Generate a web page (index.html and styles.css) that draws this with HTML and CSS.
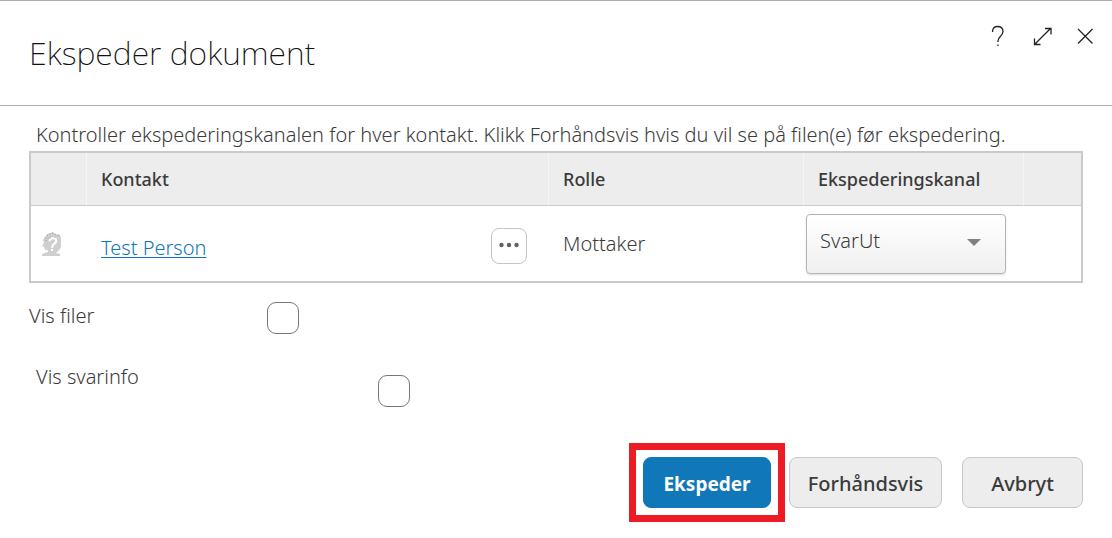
FILE: index.html
```html
<!DOCTYPE html>
<html lang="no">
<head>
    <meta charset="UTF-8">
    <title>Ekspeder dokument</title>
    <link rel="stylesheet" href="styles.css">
</head>
<body>
    <div class="dialog">
        <header class="dialog-header">
            <h1>Ekspeder dokument</h1>
            <div class="tools">
                <button type="button" aria-label="Hjelp">
                    <svg width="20" height="22" viewBox="0 0 20 22"><path d="M4.500 7C4.500 3 6.500 1.500 9.500 1.500s5.500 1.500 5.500 5c0 4.500-5 5-5 9.500v1M10 19.500v1.500"/></svg>
                </button>
                <button type="button" aria-label="Maksimer">
                    <svg width="20" height="22" viewBox="0 0 20 22"><path d="M2.500 19.500L19 3M13 3.500H19V9.500M2.500 13.500V19.500H8.500"/></svg>
                </button>
                <button type="button" aria-label="Lukk">
                    <svg width="20" height="22" viewBox="0 0 20 22"><path d="M2 4L16.500 18.500M16.500 4L2 18.500"/></svg>
                </button>
            </div>
        </header>

        <form class="dialog-body">
            <p class="intro">Kontroller ekspederingskanalen for hver kontakt. Klikk Forhåndsvis hvis du vil se på filen(e) før ekspedering.</p>

            <table class="contacts">
                <thead>
                    <tr>
                        <th class="col-icon"></th>
                        <th>Kontakt</th>
                        <th class="col-role">Rolle</th>
                        <th class="col-channel"><label for="kanal">Ekspederingskanal</label></th>
                        <th class="col-end"></th>
                    </tr>
                </thead>
                <tbody>
                    <tr>
                        <td class="cell-icon">
                            <svg width="22" height="26" viewBox="0 0 22 26">
                                <path fill="#cfcfcf" d="M12 1l3 2 4 1 1 3v9l-1 2-3 3-1 1 4 1v2H1v-2l6-2v-2H4l-1-3-2-1 2-3-1-3 2-3 2-3 3-1z"/>
                                <path fill="none" stroke="#999" stroke-dasharray="1 2" d="M4 7l3-3 4-2 4 2 4 1M5 10l2-3 4-1"/>
                                <path fill="none" stroke="#fff" stroke-width="2" d="M8 10l3-3 4 1v3l-3 3-1 3M10 19h2"/>
                            </svg>
                        </td>
                        <td>
                            <div class="contact">
                                <a href="#">Test Person</a>
                                <button type="button" class="more" aria-label="Mer">
                                    <svg width="22" height="8" viewBox="0 0 22 8"><circle cx="3.500" cy="3" r="2.200"/><circle cx="11" cy="3" r="2.200"/><circle cx="18.500" cy="3" r="2.200"/></svg>
                                </button>
                            </div>
                        </td>
                        <td class="cell-role">Mottaker</td>
                        <td class="cell-channel">
                            <div class="select">
                                <select id="kanal">
                                    <option>SvarUt</option>
                                </select>
                            </div>
                        </td>
                        <td></td>
                    </tr>
                </tbody>
            </table>

            <div class="option option-files">
                <label for="filer">Vis filer</label>
                <input type="checkbox" id="filer">
            </div>
            <div class="option option-info">
                <label for="svarinfo">Vis svarinfo</label>
                <input type="checkbox" id="svarinfo">
            </div>

            <div class="actions">
                <div class="highlight">
                    <button type="button" class="btn btn-primary">Ekspeder</button>
                </div>
                <button type="button" class="btn btn-preview">Forhåndsvis</button>
                <button type="button" class="btn btn-cancel">Avbryt</button>
            </div>
        </form>
    </div>
</body>
</html>
```
FILE: styles.css
```css
* {
    box-sizing: border-box;
    margin: 0;
    padding: 0;
}
body {
    background: #fff;
    color: #3b3b3b;
    font-family: "Noto Sans", "Open Sans", sans-serif;
    font-size: 20px;
    font-weight: 350;
    line-height: 28px;
}
button, select, input {
    font: inherit;
    color: inherit;
}
button {
    cursor: pointer;
}
svg {
    display: block;
}

.dialog {
    border-top: 1px solid #adadad;
}
.dialog-header {
    display: flex;
    justify-content: space-between;
    align-items: flex-start;
    padding: 24px 16px 24px 29px;
    border-bottom: 1px solid #adadad;
}
h1 {
    color: #111;
    font-size: 32px;
    font-weight: 200;
    line-height: 56px;
}
.tools {
    display: flex;
    gap: 24px;
}
.tools button {
    border: 0;
    background: none;
}
.tools path {
    fill: none;
    stroke: #222;
    stroke-width: 1.3;
}

.dialog-body {
    padding: 15px 29px;
}
.intro {
    padding: 0 7px 2px;
}

.contacts {
    width: 100%;
    table-layout: fixed;
    border: 2px solid #cacaca;
    border-spacing: 0;
}
.contacts th {
    height: 53px;
    padding: 0 14px;
    background: #ededed;
    border-bottom: 1px solid #cacaca;
    border-right: 1px solid #f5f5f5;
    font-size: 18px;
    font-weight: 500;
    text-align: left;
}
.contacts th:last-child {
    border-right: 0;
}
.contacts td {
    height: 75px;
    padding: 0 14px;
}
.col-icon {
    width: 56px;
}
.col-role {
    width: 255px;
}
.col-channel {
    width: 220px;
}
.col-end {
    width: 57px;
}
.contacts .cell-icon {
    padding: 0 10px;
}
.contacts .cell-channel {
    padding: 0 2px;
}
.contact {
    display: flex;
    justify-content: space-between;
    align-items: center;
    padding: 4px 8px 0 0;
}
.contact a {
    padding-top: 4px;
    color: #1077b8;
    text-decoration-thickness: 1px;
    text-underline-offset: 2px;
}
.more {
    display: flex;
    justify-content: center;
    align-items: center;
    width: 36px;
    height: 36px;
    border: 1px solid #c4c4c4;
    border-radius: 8px;
    background: #fff;
}
.more svg {
    fill: #5c6165;
}
.select {
    position: relative;
    width: 200px;
}
.select::after {
    content: "";
    position: absolute;
    top: 25px;
    right: 25px;
    border: 7px solid transparent;
    border-top-color: #808080;
    border-bottom: 0;
    pointer-events: none;
}
select {
    display: block;
    appearance: none;
    width: 100%;
    height: 60px;
    padding: 0 40px 6px 13px;
    border: 1px solid #b4b4b4;
    border-radius: 4px;
    background: linear-gradient(#fff, #f0f0f0);
    box-shadow: 0 1px 2px #ddd;
}

.option {
    display: flex;
    align-items: flex-start;
}
.option input {
    appearance: none;
    width: 32px;
    height: 32px;
    border: 1px solid #777;
    border-radius: 9px;
    background: #fff;
}
.option-files {
    padding-top: 19px;
}
.option-files label {
    width: 238px;
}
.option-info {
    padding: 29px 7px 0;
}
.option-info label {
    width: 342px;
}
.option-info input {
    margin-top: 12px;
}

.actions {
    display: flex;
    justify-content: flex-end;
    align-items: center;
    padding-top: 36px;
}
.highlight {
    padding: 7px;
    border: 7px solid #ed1c24;
}
.btn {
    display: block;
    height: 51px;
    padding-top: 2px;
    border: 1px solid #c8c8c8;
    border-radius: 8px;
    background: #ededed;
    font-weight: 500;
}
.btn-primary {
    width: 128px;
    border-color: #1077b8;
    background: #1077b8;
    color: #fff;
    font-size: 19px;
    font-weight: 700;
}
.btn-preview {
    width: 153px;
    margin: 0 20px 0 4px;
}
.btn-cancel {
    width: 121px;
}
```
